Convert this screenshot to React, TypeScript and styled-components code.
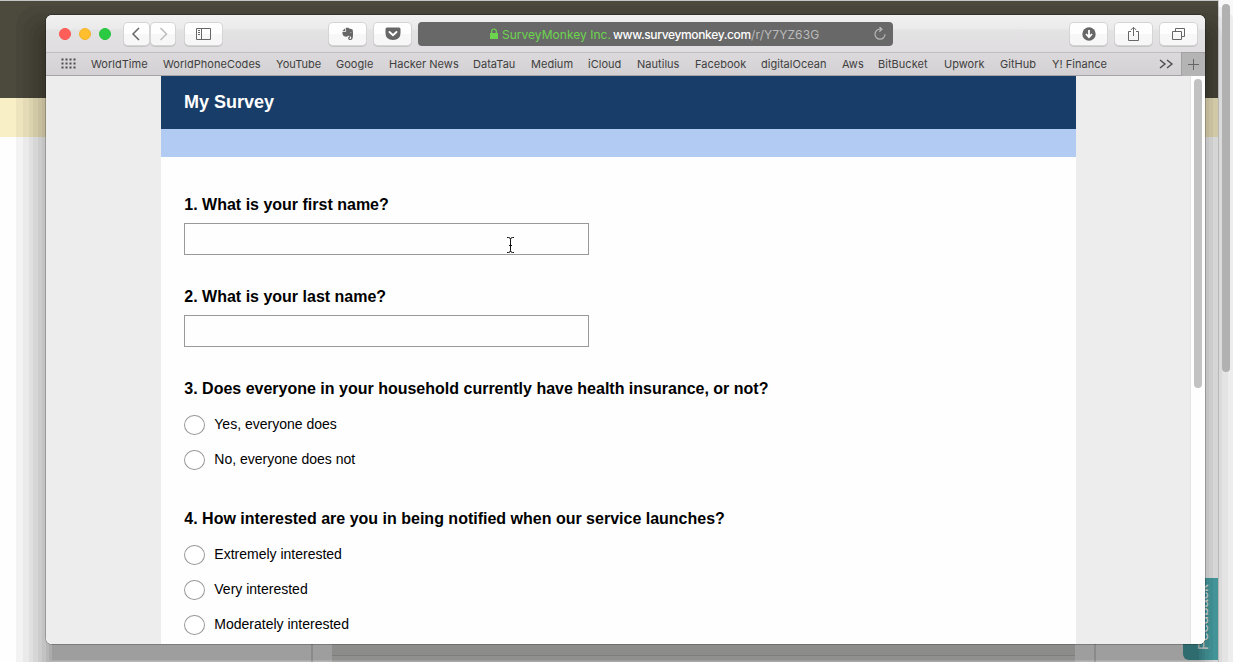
import React from 'react';
import styled, { createGlobalStyle } from 'styled-components';

const Global = createGlobalStyle`
  * { box-sizing: border-box; }
  body { margin: 0; overflow: hidden; background: #fff; }
`;

const ui = `Inter, "Liberation Sans", sans-serif`;
const arial = `"Liberation Sans", Arial, sans-serif`;

const Desktop = styled.div`
  position: relative;
  display: flex;
  width: 1233px;
  height: 662px;
  overflow: hidden;
`;
const BackPage = styled.div`
  flex: 1;
  display: flex;
  flex-direction: column;
  border-top: 1px solid #c4c6c6;
  background: #fefefe;
`;
const DarkBand = styled.div`
  height: 97px;
  background: #4c4a3d;
`;
const YellowBand = styled.div`
  height: 39px;
  background: #f8efc6;
`;
const BackBody = styled.div`
  flex: 1;
  display: flex;
  align-items: flex-end;
`;
const BackFooter = styled.div`
  display: flex;
  height: 18px;
  margin-left: 311px;
  width: 785px;
  border: solid #dedede;
  border-width: 0 2px;
`;
const BackFooterInner = styled.div`
  width: 743px;
  margin-left: 19px;
  background: linear-gradient(#e2e2e0 11px, #cacac8 11px, #cacac8 12px, #e8e8e6 12px);
`;
const BackScroll = styled.div`
  width: 15px;
  padding: 4px 3px 0 3px;
  border-left: 1px solid #cfcfcf;
  background: #f8f8f8;
`;
const BackThumb = styled.div`
  position: relative;
  z-index: 3;
  width: 8px;
  height: 368px;
  border-radius: 4px;
  background: #b1b1b1;
`;
const Feedback = styled.div`
  position: absolute;
  left: 1183px;
  top: 578px;
  width: 35px;
  height: 82px;
  display: flex;
  align-items: center;
  justify-content: center;
  padding-right: 4px;
  padding-top: 4px;
  writing-mode: vertical-rl;
  transform: rotate(180deg);
  border-radius: 0 6px 6px 0;
  background: #4fb0b5;
  color: #fff;
  font: 15px ${arial};
`;

const Window = styled.div`
  position: absolute;
  left: 46px;
  top: 15px;
  width: 1159px;
  height: 629px;
  border-radius: 6px;
  box-shadow:
    0 0 0 1px rgba(0, 0, 0, 0.22),
    0 22px 0 -6px rgba(0, 0, 0, 0.08),
    0 20px 0 -3px rgba(0, 0, 0, 0.06),
    0 22px 0 0 rgba(0, 0, 0, 0.06),
    0 21px 0 4px rgba(0, 0, 0, 0.045),
    0 21px 0 8px rgba(0, 0, 0, 0.045),
    0 21px 0 13px rgba(0, 0, 0, 0.045),
    0 21px 0 17px rgba(0, 0, 0, 0.04),
    0 21px 0 23px rgba(0, 0, 0, 0.035),
    0 21px 0 30px rgba(0, 0, 0, 0.045);
`;
const WindowClip = styled.div`
  height: 100%;
  display: flex;
  flex-direction: column;
  overflow: hidden;
  border-radius: 6px;
  background: #fff;
`;
const Toolbar = styled.div`
  display: flex;
  align-items: center;
  height: 37px;
  padding: 1px 8px 0 13px;
  background: linear-gradient(#f2f1f2 0, #ebeaeb 14px, #e4e3e4 15px, #dfdddf 100%);
`;
const Lights = styled.div`
  display: flex;
  gap: 8px;
  margin-right: 13px;
`;
const Light = styled.span<{ $c: string; $edge: string }>`
  width: 12px;
  height: 12px;
  border-radius: 50%;
  border: 1px solid ${p => p.$edge};
  background: ${p => p.$c};
`;
const ToolButton = styled.div<{ $w: number; $gap?: number }>`
  display: flex;
  flex-shrink: 0;
  align-items: center;
  justify-content: center;
  width: ${p => p.$w}px;
  height: 22px;
  margin-right: ${p => p.$gap || 0}px;
  border-radius: 4px;
  background: linear-gradient(#fefefe 50%, #f7f7f7 50%);
  box-shadow: 0 0 0 1px #d6d5d6, 0 1px 0 1px #c6c5c6;
`;
const Address = styled.div`
  display: flex;
  align-items: center;
  width: 475px;
  height: 24px;
  margin-right: auto;
  padding-left: 71px;
  border-radius: 4px;
  background: #686868;
  color: #bcbcbc;
  font: 12px ${ui};
  white-space: pre;
`;
const Secure = styled.span`
  width: 111px;
  margin-left: 3px;
  color: #6bd64d;
  letter-spacing: 0.02px;
`;
const Host = styled.span`
  width: 138px;
  color: #fff;
  font-weight: 500;
  letter-spacing: -0.35px;
`;
const UrlPath = styled.span`
  letter-spacing: 0.1px;
`;
const Reload = styled.svg`
  margin-left: auto;
  margin-right: 6px;
`;

const BookmarkBar = styled.div`
  display: flex;
  align-items: center;
  height: 24px;
  padding-left: 15px;
  border-top: 1px solid #c0bec0;
  border-bottom: 1px solid #a5a3a5;
  background: linear-gradient(#dbd9db, #d3d1d3);
  font: 11px ${ui};
  letter-spacing: 0.03px;
  color: #404040;
`;
const GridIcon = styled.svg`
  margin-right: 14px;
`;
const Bookmark = styled.span<{ $w: number }>`
  width: ${p => p.$w}px;
  white-space: nowrap;
`;
const More = styled.svg`
  margin-left: auto;
  margin-right: 7px;
`;
const NewTab = styled.div`
  display: flex;
  align-items: center;
  justify-content: center;
  width: 24px;
  height: 24px;
  border-left: 1px solid #a3a2a3;
  border-top: 1px solid #a3a2a3;
  background: #b5b4b5;
`;

const Viewport = styled.div`
  flex: 1;
  display: flex;
  min-height: 0;
  background: #ededed;
`;
const Survey = styled.main`
  width: 915px;
  margin-left: 114.5px;
  background: #fefefe;
  overflow: hidden;
  font-family: ${arial};
  color: #000;
`;
const SurveyHeader = styled.h1`
  height: 53px;
  margin: 0;
  padding-left: 23.5px;
  background: #193d69;
  color: #fff;
  font-size: 18px;
  line-height: 52px;
`;
const Progress = styled.div`
  height: 28px;
  margin-bottom: 38px;
  background: #b2cbf2;
`;
const Question = styled.section<{ $h: number }>`
  height: ${p => p.$h}px;
  padding-left: 23.8px;
`;
const Prompt = styled.h2`
  margin: 0;
  height: 28px;
  font-size: 16px;
  line-height: 19px;
`;
const TextField = styled.div`
  position: relative;
  width: 404.5px;
  height: 32px;
  border: 1px solid #999;
`;
const Cursor = styled.svg`
  position: absolute;
  left: 321px;
  top: 13px;
`;
const Choice = styled.div`
  display: flex;
  align-items: center;
  gap: 9.5px;
  height: 35px;
  padding-bottom: 1px;
  font-size: 14px;
  line-height: 16px;
`;
const Radio = styled.span`
  width: 20.5px;
  height: 20px;
  margin-top: 2px;
  border: 1px solid #999;
  border-radius: 50%;
  background: #fff;
`;
const InnerScroll = styled.div`
  width: 15px;
  margin-left: auto;
  padding: 3px 3px 0;
  border-left: 1px solid #e4e4e4;
  background: #fefefe;
`;
const InnerThumb = styled.div`
  width: 8px;
  height: 309px;
  border-radius: 4px;
  background: #c2c2c2;
`;

const bookmarks: [string, number][] = [
  ['WorldTime', 72], ['WorldPhoneCodes', 113], ['YouTube', 60], ['Google', 53],
  ['Hacker News', 84], ['DataTau', 58], ['Medium', 57], ['iCloud', 49],
  ['Nautilus', 58], ['Facebook', 66], ['digitalOcean', 81], ['Aws', 36],
  ['BitBucket', 66], ['Upwork', 56], ['GitHub', 52], ['Y! Finance', 60],
];

const Chevron = ({ d, color }: { d: string; color: string }) => (
  <svg width="12" height="14" fill="none" stroke={color} strokeWidth="1.5"><path d={d} /></svg>
);

export default function App() {
  return (
    <Desktop>
      <Global />
      <BackPage>
        <DarkBand />
        <YellowBand />
        <BackBody><BackFooter><BackFooterInner /></BackFooter></BackBody>
      </BackPage>
      <BackScroll><BackThumb /></BackScroll>
      <Feedback>Feedback</Feedback>

      <Window>
        <WindowClip>
          <Toolbar>
            <Lights>
              <Light $c="#ff5f58" $edge="#f9564f" />
              <Light $c="#ffbe2e" $edge="#f5b429" />
              <Light $c="#2acb42" $edge="#25c23c" />
            </Lights>
            <ToolButton $w={25} $gap={2}><Chevron d="M8 1 2 7l6 6" color="#666" /></ToolButton>
            <ToolButton $w={24} $gap={10}><Chevron d="M3.500 1l6 6-6 6" color="#bcbcbc" /></ToolButton>
            <ToolButton $w={37} $gap={107}>
              <svg width="15" height="13" fill="none" stroke="#666">
                <path d="M.5 .5h14v11H.5zM5.5 .5v11M2 2.500h2M2 4.500h2M2 6.500h2" />
              </svg>
            </ToolButton>
            <ToolButton $w={37} $gap={8}>
              <svg width="14" height="14" fill="#666">
                <path d="M4.300 1v3H1.500zM5 .8h2c.8 0 1.200.6 1.400 1 1.300.2 2.600.1 3.100.8.5 1.200.8 5.600.2 8.200-.3 1.500-1 2.200-2.500 2.200-1.400 0-2.100-.7-2.100-1.800 0-1 .7-1.700 1.900-1.700v1.200c-.6 0-.8.2-.8.6 0 .5.4.7 1 .7.7 0 1-.5 1-1.400 0-.7-.3-1.200-1.600-1.300-.7 0-1.200-.3-1.500-.8-.2.7-.7 1.200-1.500 1.200-2.500 0-3.600-1-4-2.500-.2-.8-.3-1.600-.1-2.400H4.500c.4 0 .6-.2.6-.6z" />
                <path d="M9 5.500c.8-.6 1.400-.4 1.700.5z" fill="#fff" />
              </svg>
            </ToolButton>
            <ToolButton $w={37} $gap={7}>
              <svg width="16" height="14">
                <path d="M2 .5h12q1.500 0 1.500 1.500v4q0 7-7.500 7T.5 6V2Q.5.500 2 .5z" fill="#666" />
                <path d="M4.500 5 8 8.200 11.500 5" fill="none" stroke="#fff" strokeWidth="1.900" strokeLinecap="round" strokeLinejoin="round" />
              </svg>
            </ToolButton>
            <Address>
              <svg width="10" height="12"><path d="M1 5h8v6H1z" fill="#6bd64d" /><path d="M2.700 5V3.300a2.300 2.300 0 0 1 4.600 0V5" fill="none" stroke="#6bd64d" strokeWidth="1.200" /></svg>
              <Secure>SurveyMonkey Inc.</Secure>
              <Host>www.surveymonkey.com</Host>
              <UrlPath>/r/Y7YZ63G</UrlPath>
              <Reload width="14" height="14" fill="none" stroke="#b8b8b8" strokeWidth="1.200">
                <path d="M8 2.200H7a5 5 0 1 0 5 5M6.300-.3 9 2.200 6.300 4.700" />
              </Reload>
            </Address>
            <ToolButton $w={37} $gap={8}>
              <svg width="14" height="14"><circle cx="7" cy="7" r="6.700" fill="#666" /><path d="M7 3v7M4 7l3 3.200L10 7" fill="none" stroke="#fff" strokeWidth="1.800" /></svg>
            </ToolButton>
            <ToolButton $w={37} $gap={8}>
              <svg width="13" height="16" fill="none" stroke="#666"><path d="M4 5.500H1.500v9h10v-9H9M6.500 10V1.500M3.800 4l2.700-2.700L9.200 4" /></svg>
            </ToolButton>
            <ToolButton $w={37}>
              <svg width="14" height="14" fill="none" stroke="#666"><path d="M.5 4.500h9v8h-9zM3.500 4V1.500h9v8H10" /></svg>
            </ToolButton>
          </Toolbar>
          <BookmarkBar>
            <GridIcon width="16" height="12" fill="#4c4c4c">
              {[0, 4, 8, 12].flatMap(x => [0, 4, 8].map(y => <rect key={`${x}-${y}`} x={x + 0.5} y={y + 0.5} width="2" height="2" />))}
            </GridIcon>
            {bookmarks.map(([name, w]) => <Bookmark key={name} $w={w}>{name}</Bookmark>)}
            <More width="15" height="10" fill="none" stroke="#4c4c4c" strokeWidth="1.400"><path d="M1 1l5 4-5 4M8 1l5 4-5 4" /></More>
            <NewTab><svg width="11" height="11" stroke="#666"><path d="M5.500 0v11M0 5.500h11" /></svg></NewTab>
          </BookmarkBar>
          <Viewport>
            <Survey>
              <SurveyHeader>My Survey</SurveyHeader>
              <Progress />
              <Question $h={92}>
                <Prompt>1. What is your first name?</Prompt>
                <TextField>
                  <Cursor width="9" height="17" fill="none" stroke="#111">
                    <path d="M1 .5h1.500q2 0 2 2v11q0 2-2 2H1M8 .5H6.500q-2 0-2 2M8 15.500H6.500q-2 0-2-2M3 8.500h3" />
                  </Cursor>
                </TextField>
              </Question>
              <Question $h={92}>
                <Prompt>2. What is your last name?</Prompt>
                <TextField />
              </Question>
              <Question $h={130}>
                <Prompt>3. Does everyone in your household currently have health insurance, or not?</Prompt>
                <Choice><Radio />Yes, everyone does</Choice>
                <Choice><Radio />No, everyone does not</Choice>
              </Question>
              <Question $h={160}>
                <Prompt>4. How interested are you in being notified when our service launches?</Prompt>
                <Choice><Radio />Extremely interested</Choice>
                <Choice><Radio />Very interested</Choice>
                <Choice><Radio />Moderately interested</Choice>
              </Question>
            </Survey>
            <InnerScroll><InnerThumb /></InnerScroll>
          </Viewport>
        </WindowClip>
      </Window>
    </Desktop>
  );
}
